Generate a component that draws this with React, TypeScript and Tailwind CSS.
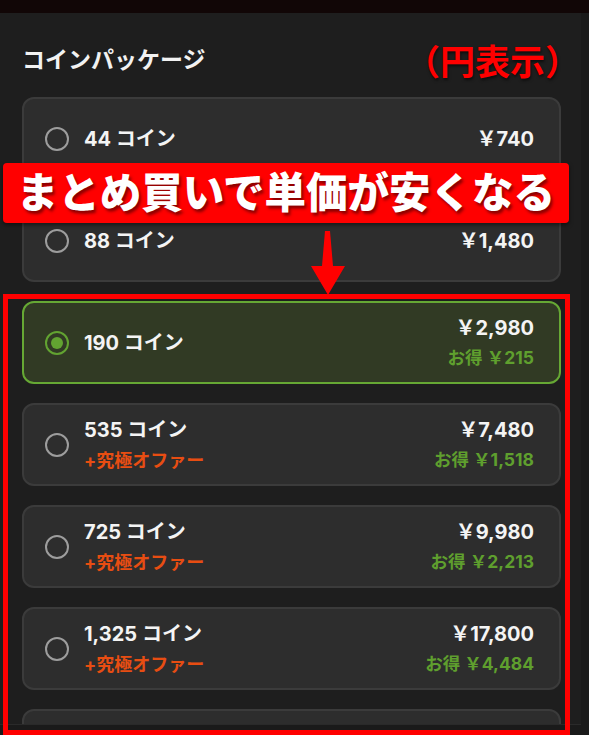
import React from 'react';

type Pack = {
  coins: string;
  price: string;
  save?: string;
  offer?: boolean;
  selected?: boolean;
};

const packs: Pack[] = [
  { coins: '44', price: '740' },
  { coins: '88', price: '1,480' },
  { coins: '190', price: '2,980', save: '215', selected: true },
  { coins: '535', price: '7,480', save: '1,518', offer: true },
  { coins: '725', price: '9,980', save: '2,213', offer: true },
  { coins: '1,325', price: '17,800', save: '4,484', offer: true },
];

const Radio = ({ on }: { on?: boolean }) =>
  on ? (
    <div className="w-[24px] h-[24px] rounded-full border-[2.5px] border-[#62a331] flex items-center justify-center shrink-0">
      <div className="w-[12px] h-[12px] rounded-full bg-[#62a331]" />
    </div>
  ) : (
    <div className="w-[24px] h-[24px] rounded-full border-[2.5px] border-[#9d9d9d] shrink-0" />
  );

const PackCard = ({ pack }: { pack: Pack }) => (
  <div
    className={
      pack.selected
        ? 'h-[83px] rounded-[12px] border-[2px] border-[#66a834] bg-[#313a24] flex items-center pl-[21px] pr-[25px]'
        : 'h-[83px] rounded-[12px] border-[2px] border-[#3b3b3b] bg-[#2d2d2d] flex items-center pl-[21px] pr-[25px]'
    }
  >
    <Radio on={pack.selected} />
    <div className="ml-[15px] flex-1 flex flex-col">
      <div className="text-[20px] leading-[28px] font-bold text-[#f4f4f4]">
        {pack.coins} コイン
      </div>
      {pack.offer && (
        <div className="text-[18px] leading-[26px] font-bold text-[#e84d12] mt-[4px]">+究極オファー</div>
      )}
    </div>
    <div className="flex flex-col items-end">
      <div className="text-[20px] leading-[28px] font-bold text-[#f4f4f4]">￥{pack.price}</div>
      {pack.save && (
        <div className="text-[17.5px] leading-[26px] font-bold text-[#5f9f2e] mt-[3px]">お得 ￥{pack.save}</div>
      )}
    </div>
  </div>
);

export default function App() {
  return (
    <div
      className="relative w-[589px] h-[735px] bg-[#1a1a1a] overflow-hidden"
      style={{ fontFamily: 'Inter, "Noto Sans CJK JP", sans-serif' }}
    >
      <div className="h-[13px] bg-[#110606]" />
      <div className="w-[581px] h-[712px] bg-[#1e1e1e] overflow-hidden pt-[33px] pl-[22px] pr-[20px] border-b border-[#2a2a2a]">
        <h2 className="text-[23px] leading-[28px] font-bold text-[#f2f2f2]">コインパッケージ</h2>
        <div className="mt-[23px] flex flex-col gap-[19px]">
          {packs.map((p) => (
            <PackCard key={p.coins} pack={p} />
          ))}
          {/* next package, scrolled below the fold */}
          <div className="h-[83px] shrink-0 rounded-[12px] border-[2px] border-[#3b3b3b] bg-[#2d2d2d]" />
        </div>
      </div>

      {/* annotations */}
      <div
        className="absolute left-[405px] top-[37px] text-[35px] leading-[50px] font-bold text-[#ff0000]"
        style={{ textShadow: '1px 2px 3px rgba(0,0,0,0.6)' }}
      >
        （円表示）
      </div>

      <div className="absolute left-[3px] top-[163px] w-[566px] h-[60px] bg-[#ff0000] rounded-[4px] flex items-center justify-center shadow-[0_2px_4px_rgba(0,0,0,0.5)]">
        <span
          className="text-[41.5px] leading-[60px] font-black text-white"
          style={{ textShadow: '2px 3px 3px rgba(90,0,0,0.7)' }}
        >
          まとめ買いで単価が安くなる
        </span>
      </div>

      <svg className="absolute left-[308px] top-[229px]" width="40" height="68" viewBox="0 0 40 68">
        <polygon points="17,2 22,2 25,37 37,37 20,66 3,37 14,37" fill="#ff0000" />
      </svg>

      <div className="absolute left-[3px] top-[294px] w-[567px] h-[441px] border-[5px] border-[#ff0000] pointer-events-none" />
    </div>
  );
}
